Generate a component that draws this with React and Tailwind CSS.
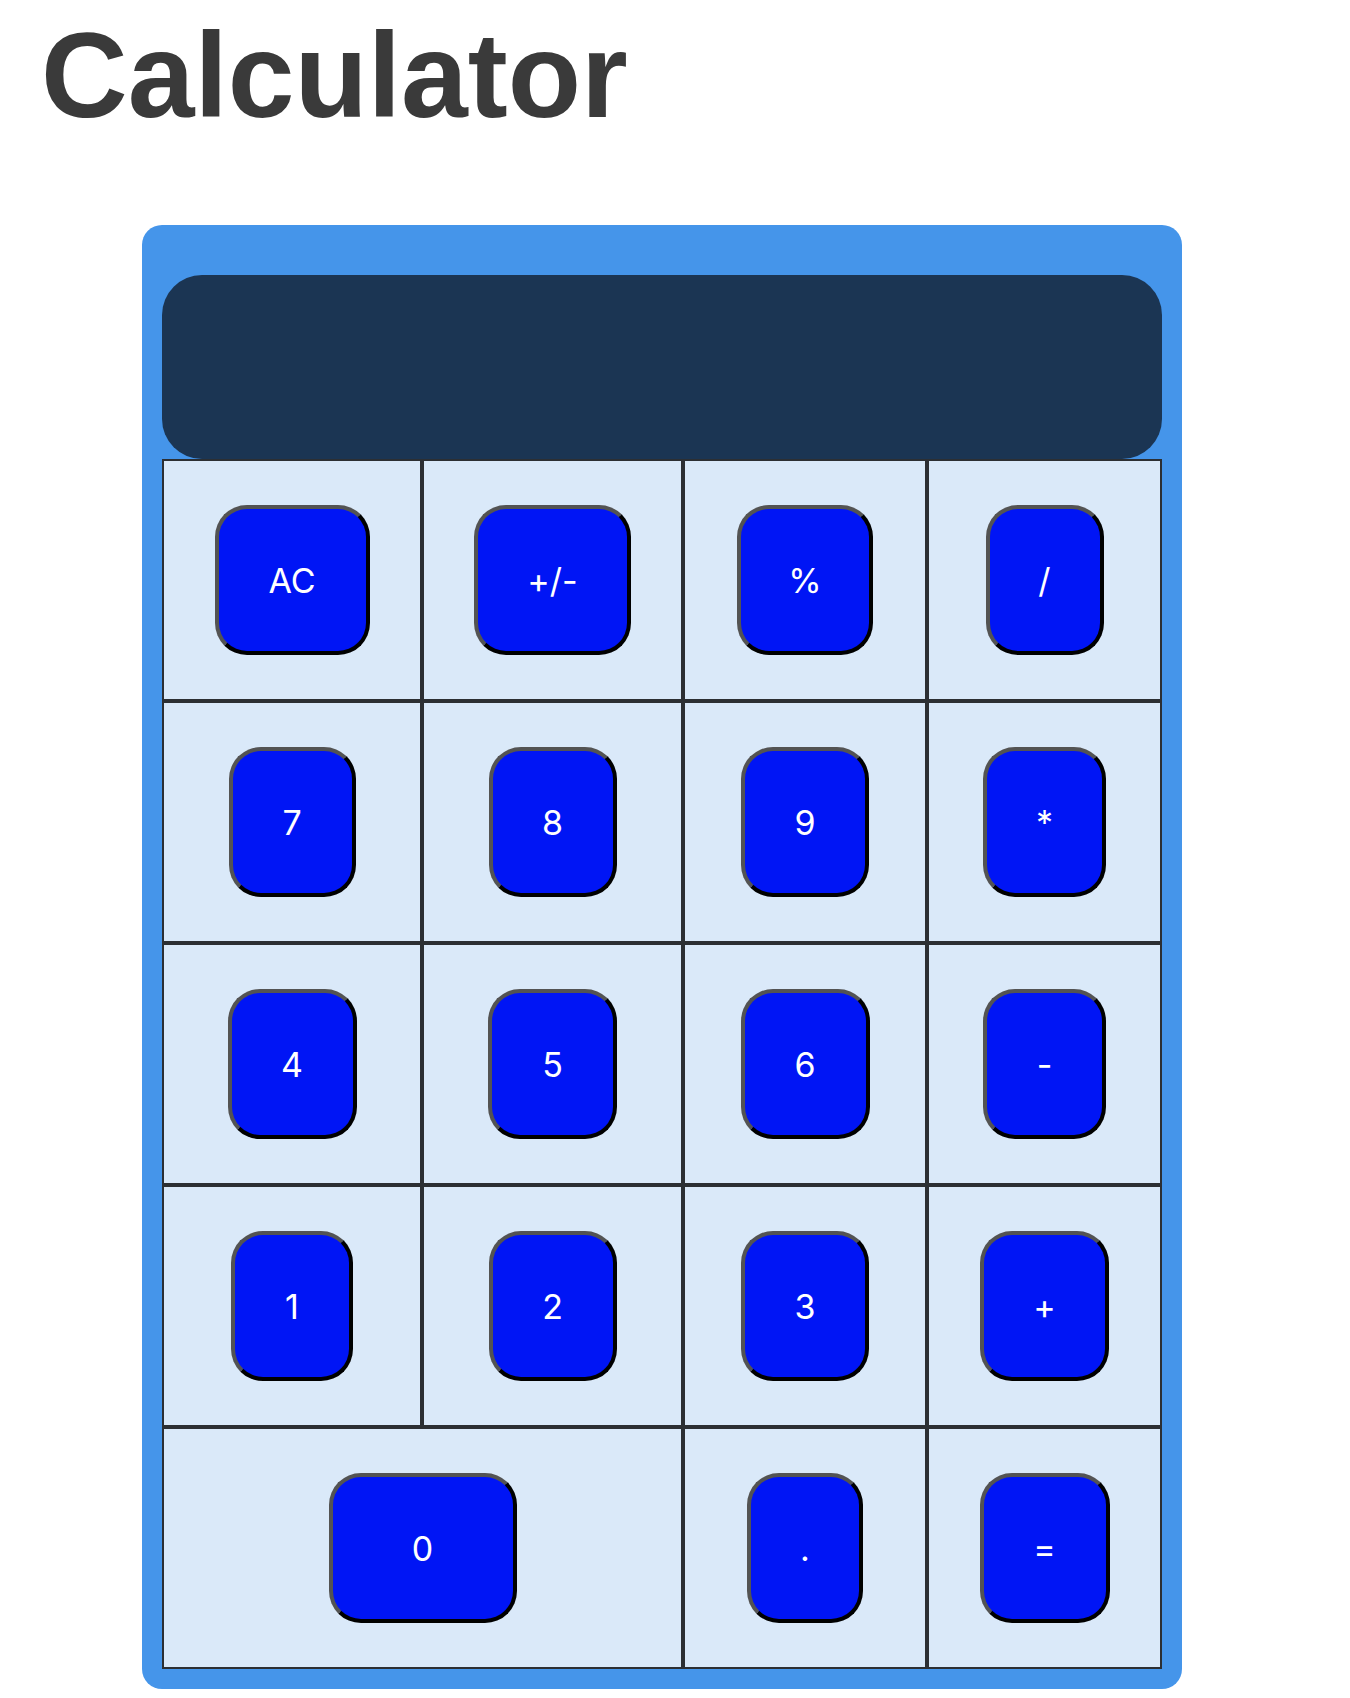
import React from 'react';

const rows = [
  [
    { label: 'AC', w: 'w-[155px]' },
    { label: '+/-', w: 'w-[157px]' },
    { label: '%', w: 'w-[136px]' },
    { label: '/', w: 'w-[118px]' },
  ],
  [
    { label: '7', w: 'w-[127px]' },
    { label: '8', w: 'w-[128px]' },
    { label: '9', w: 'w-[128px]' },
    { label: '*', w: 'w-[123px]' },
  ],
  [
    { label: '4', w: 'w-[129px]' },
    { label: '5', w: 'w-[129px]' },
    { label: '6', w: 'w-[129px]' },
    { label: '-', w: 'w-[123px]' },
  ],
  [
    { label: '1', w: 'w-[122px]' },
    { label: '2', w: 'w-[128px]' },
    { label: '3', w: 'w-[128px]' },
    { label: '+', w: 'w-[129px]' },
  ],
  [
    { label: '0', w: 'w-[188px]', span: true },
    { label: '.', w: 'w-[116px]' },
    { label: '=', w: 'w-[130px]' },
  ],
];

const Key = ({ label, w }) => (
  <button
    className={`${w} h-[150px] rounded-[32px] border-4 border-t-[#535353] border-l-[#535353] border-b-black border-r-black bg-[#0015f5] text-white text-[34px] font-['Inter',sans-serif] flex items-center justify-center`}
  >
    {label}
  </button>
);

const App = () => {
  return (
    <div className="min-h-[1698px] bg-white">
      <h1 className="pl-[41px] pt-[15px] text-[120px] leading-[120px] font-bold text-[#3a3a3a] font-['Liberation_Sans',Arial,sans-serif]">
        Calculator
      </h1>

      <div className="ml-[142px] mt-[90px] w-[1040px] rounded-[20px] bg-[#4595ea] px-[20px] pt-[50px] pb-[20px]">
        <div className="h-[184px] w-full rounded-[40px] bg-[#1b3553]"></div>

        <div className="grid grid-cols-[260px_261px_244px_235px]">
          {rows.map((row, ri) =>
            row.map((key) => (
              <div
                key={`${ri}-${key.label}`}
                className={`${key.span ? 'col-span-2' : ''} h-[242px] border-2 border-[#2c2f33] bg-[#dae9f9] flex items-center justify-center`}
              >
                <Key label={key.label} w={key.w} />
              </div>
            ))
          )}
        </div>
      </div>
    </div>
  );
};

export default App;
